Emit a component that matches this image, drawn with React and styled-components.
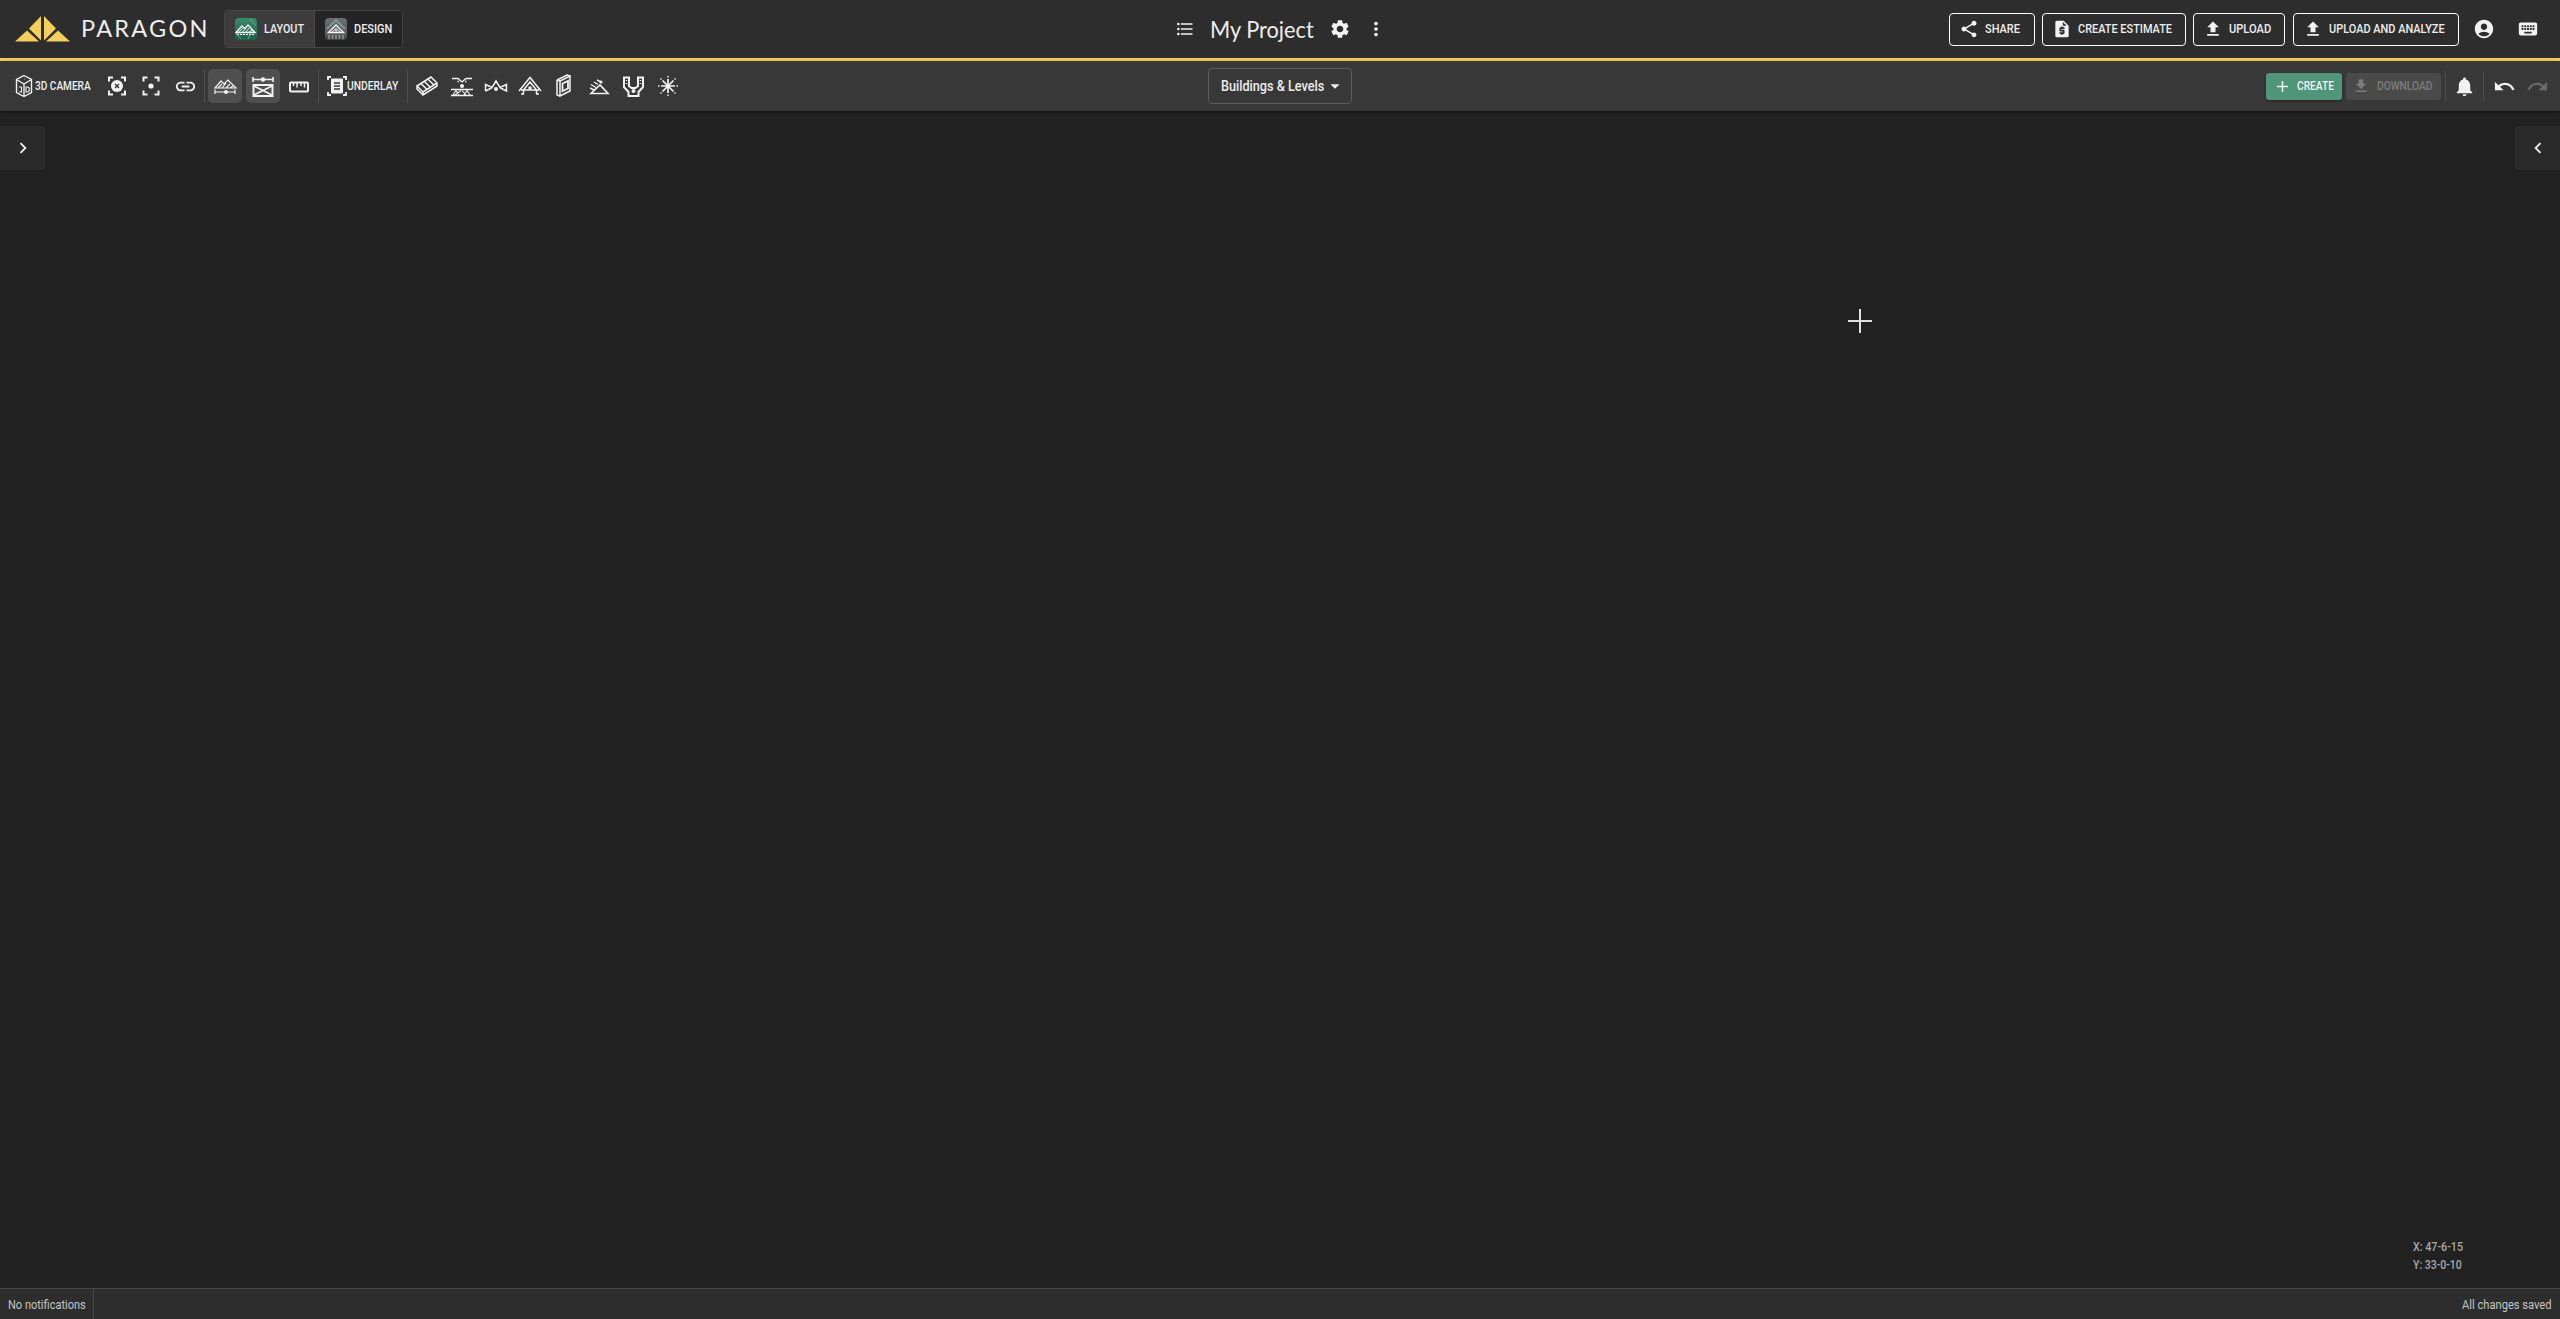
import React, { useLayoutEffect, useRef, useState } from "react";
import styled, { createGlobalStyle } from "styled-components";
import {
  MdShare, MdRequestQuote, MdFileUpload, MdFileDownload, MdAccountCircle, MdKeyboard, MdSettings, MdMoreVert,
  MdAdd, MdNotifications, MdUndo, MdRedo, MdChevronLeft, MdChevronRight, MdLink, MdArrowDropDown, MdFormatListBulleted,
} from "react-icons/md";

const Global = createGlobalStyle`
  html, body { margin: 0; padding: 0; background: #212121; }
  #root { height: 100vh; }
  * { box-sizing: border-box; }
  svg { flex-shrink: 0; }
  body { font-family: Roboto, "Liberation Sans", sans-serif; color: #eee; overflow: hidden; }
`;

const Page = styled.div`
  display: flex; flex-direction: column; height: 1319px; width: 2560px;
`;
const Header = styled.header`
  flex: 0 0 61px; display: grid; grid-template-columns: 1fr auto 1fr; align-items: center;
  background: #2d2d2d; border-bottom: 3px solid #f5cf5c;
`;
const HeaderLeft = styled.div`
  display: flex; align-items: center; padding-left: 15px;
`;
const Brand = styled.div`
  display: flex; align-items: center; gap: 10px; width: 209px;
`;
const BrandName = styled.span`
  font-family: Lato, sans-serif; font-size: 23.5px; letter-spacing: 2.25px; color: #eee; font-weight: 400; line-height: 1;
`;
const ModeTabs = styled.div`
  display: flex; height: 38px; border: 1px solid #444; border-radius: 4px; overflow: hidden;
`;
const ModeTab = styled.div`
  display: flex; align-items: center; gap: 7px; width: ${p => p.$w}px; padding-left: 10px;
  background: ${p => (p.$active ? "#3c3c3c" : "#242424")};
  ${p => p.$active && "border-right: 1px solid #4a4a4a;"}
`;
const FitBox = styled.span`
  display: flex; align-items: center; flex: 0 0 auto; width: ${p => p.$w}px; white-space: nowrap; line-height: 1;
`;
const FitInner = styled.span`
  display: block; flex: 0 0 auto; transform-origin: left center; line-height: 1;
  font-family: ${p => p.$family || "Roboto, sans-serif"};
  font-size: ${p => p.$size || 13.5}px; font-weight: ${p => p.$weight || 500}; color: ${p => p.$color || "#eee"};
`;
const HeaderCenter = styled.div`
  display: flex; align-items: center; color: #f2f2f2;
`;
const CenterIcon = styled.div`
  display: flex; align-items: center; justify-content: center; width: 24px; margin: 0 ${p => p.$mr || 0}px 0 ${p => p.$ml || 0}px;
`;
const HeaderRight = styled.div`
  display: flex; align-items: center; justify-content: flex-end; padding-right: 13px;
`;
const OutlineButton = styled.div`
  display: flex; align-items: center; gap: 6px; width: ${p => p.$w}px; height: 33px; padding-left: 9px;
  margin-right: ${p => p.$mr}px; border: 1px solid #fff; border-radius: 4px; color: #f2f2f2;
`;
const RoundIcon = styled.div`
  display: flex; align-items: center; justify-content: center; width: ${p => p.$w}px;
  color: ${p => p.$color || "#f2f2f2"};
`;
const Toolbar = styled.div`
  flex: 0 0 50px; display: grid; grid-template-columns: 1fr auto 1fr; align-items: center;
  background: #383838; box-shadow: 0 1px 3px rgba(0,0,0,.5); position: relative; z-index: 1;
`;
const ToolGroup = styled.div`
  display: flex; align-items: center; padding-left: 14px;
`;
const LabelTool = styled.div`
  display: flex; align-items: center; gap: ${p => p.$gap || 0}px; width: ${p => p.$w}px; height: 34px; padding-left: ${p => p.$pl}px;
`;
const ToolBtn = styled.div`
  display: flex; align-items: center; justify-content: center; width: ${p => p.$w || 34}px; height: 34px;
  margin-right: ${p => p.$mr || 0}px; border-radius: 5px; color: #f2f2f2;
  background: ${p => (p.$active ? "#4f4f4f" : "transparent")};
`;
const Sep = styled.div`
  width: 1px; height: ${p => p.$h || 34}px; background: #4e4e4e; margin: 0 ${p => p.$mr ?? 3}px 0 ${p => p.$ml ?? 2}px;
`;
const SelectBtn = styled.div`
  display: flex; align-items: center; width: 144px; height: 36px; padding-left: 12px;
  border: 1px solid #5c5c5c; border-radius: 4px; color: #eee;
`;
const ToolRight = styled.div`
  display: flex; align-items: center; justify-content: flex-end; padding-right: 7px;
`;
const Filled = styled.div`
  display: flex; align-items: center; gap: ${p => p.$gap}px; width: ${p => p.$w}px; height: 27px; padding-left: ${p => p.$pl}px;
  margin-right: ${p => p.$mr || 0}px; border-radius: 3px; background: ${p => p.$bg};
  color: ${p => p.$color}; ${p => p.$shadow && "box-shadow: 0 1px 3px rgba(0,0,0,.4);"}
`;
const Canvas = styled.main`
  flex: 1; position: relative; background: #212121;
`;
const SideToggle = styled.div`
  position: absolute; top: 15px; ${p => p.$side}: 0; width: 45px; height: 44px;
  display: flex; align-items: center; justify-content: center; background: #2a2a2a; color: #eee;
  border-radius: ${p => (p.$side === "left" ? "0 4px 4px 0" : "4px 0 0 4px")};
`;
const CrossH = styled.div`
  position: absolute; left: 1848px; top: 209px; width: 24px; height: 2px; background: #e0e0e0;
`;
const CrossV = styled.div`
  position: absolute; left: 1859px; top: 198px; width: 2px; height: 24px; background: #e0e0e0;
`;
const Coords = styled.div`
  position: absolute; left: 2413px; bottom: 17px; display: flex; flex-direction: column; gap: 6px;
`;
const StatusBar = styled.footer`
  flex: 0 0 31px; display: flex; align-items: center; justify-content: space-between; background: #2d2d2d;
  border-top: 1px solid #464646;
`;
const StatusCell = styled.div`
  display: flex; align-items: center; height: 100%; padding: 0 8px;
  ${p => p.$divided && "border-right: 1px solid #464646; width: 94px;"}
`;

/* Roboto Condensed is not installed: the label is scaled to its measured width */
const Label = ({ w, size, color, weight, family, children }) => {
  const ref = useRef(null);
  const [scale, setScale] = useState(1);
  useLayoutEffect(() => {
    setScale(w / ref.current.offsetWidth);
  }, [w]);
  return (
    <FitBox $w={w}>
      <FitInner ref={ref} $size={size} $color={color} $weight={weight} $family={family} style={{ transform: `scaleX(${scale})` }}>
        {children}
      </FitInner>
    </FitBox>
  );
};

const Svg = ({ s = 34, w, h, children, ...rest }) => (
  <svg width={w || s} height={h || s} viewBox={`0 0 ${w || s} ${h || s}`} fill="none" stroke="#f2f2f2" strokeWidth="1.5" {...rest}>
    {children}
  </svg>
);

const Logo = () => (
  <svg width="56" height="26" viewBox="15 16 56 26" fill="#f5cf5c">
    <polygon points="15,41.5 39,41.5 27,30.5" />
    <polygon points="41,16 41,40.5 29,28.5" />
    <polygon points="44,16 44,40.5 56,28.5" />
    <polygon points="46,41.5 70,41.5 58,30.5" />
  </svg>
);

const LayoutIcon = () => (
  <svg width="22" height="22" viewBox="0 0 22 22" fill="none" stroke="#f4f4f4" strokeWidth="1.2">
    <defs>
      <linearGradient id="layoutBg" x1="0" y1="0" x2="0" y2="1">
        <stop offset="0" stopColor="#3a8a6c" /><stop offset="1" stopColor="#1f5f49" />
      </linearGradient>
    </defs>
    <rect width="22" height="22" rx="4" fill="url(#layoutBg)" stroke="none" />
    <path d="M15 1 L21 8 M1 15 L6 21 M17 13 L13 21" stroke="#5fae90" strokeWidth="1" />
    <path d="M1 14.5 L7 8 L10 10.5 L13 7 L20 14.5 Z" strokeWidth="1.4" />
    <path d="M4 14 L8 10 M7.5 14 L11 10 M11 14 L14 10 M14 14 L17 12" strokeWidth="1" />
    <path d="M2 16.5 H19" strokeDasharray="2 1" />
  </svg>
);
const DesignIcon = () => (
  <svg width="22" height="22" viewBox="0 0 22 22" fill="none" stroke="#f4f4f4" strokeWidth="1.2">
    <defs>
      <linearGradient id="designBg" x1="0" y1="0" x2="0" y2="1">
        <stop offset="0" stopColor="#667270" /><stop offset=".7" stopColor="#5a5f5e" /><stop offset="1" stopColor="#3f4241" />
      </linearGradient>
    </defs>
    <rect width="22" height="22" rx="4" fill="url(#designBg)" stroke="none" />
    <path d="M2 11 L11 2 L20 11" stroke="#8d9a97" strokeWidth="1.6" />
    <path d="M3.5 14.5 L11 7 L18.5 14.5 Z" strokeWidth="1.4" />
    <path d="M7 14 L11 10.5 L15 14 M11 10.5 V14" strokeWidth="1" />
    <path d="M4 17 V21 M7.5 17 V21 M11 17 V21 M14.5 17 V21 M18 17 V21" stroke="#9a9a9a" strokeWidth="1.4" />
  </svg>
);

const Cube = () => (
  <Svg s={20} w={18} h={24} strokeWidth="1.4">
    <path d="M9 1.5 L16.5 5.5 V18.5 L9 22.5 L1.5 18.5 V5.5 Z M1.5 5.5 L9 10 L16.5 5.5 M9 10 V22.5" />
    <path d="M4 13 h2.5 v5 h-2.5 M11 13 h2 l1.2 1 v3 l-1.2 1 h-2 Z M9 5 h.6" strokeWidth="1.1" />
  </Svg>
);
const Corners = ({ children, o = 0 }) => (
  <Svg s={24} strokeWidth="2">
    <path d={`M${8+o} 3.5 H${4+o} V7.5 M${16-o} 3.5 H${20-o} V7.5 M${8+o} 20.5 H${4+o} V16.5 M${16-o} 20.5 H${20-o} V16.5`} />
    {children}
  </Svg>
);
const FocusX = () => (
  <Corners>
    <circle cx="12" cy="12" r="6" fill="#f2f2f2" stroke="none" />
    <path d="M10 10 L14 14 M14 10 L10 14" stroke="#383838" strokeWidth="1.4" />
  </Corners>
);
const FocusDot = () => (
  <Corners o={0.5}><circle cx="12" cy="12" r="2.6" fill="#f2f2f2" stroke="none" /></Corners>
);
const RoofDim = () => (
  <Svg>
    <path d="M7 19 L13 12 L16 15 L20 11 L28 19 Z M10 19 L14 15 M14 19 L18 14 M18 19 L22 15 M22 19 L25 17" strokeWidth="1.2" />
    <path d="M7 20.5 V25 M7 23 H27 M27 20.5 V25" strokeWidth="1.2" />
    <circle cx="18" cy="23" r="2" fill="#f2f2f2" stroke="none" />
  </Svg>
);
const FloorDim = () => (
  <Svg strokeWidth="1.6">
    <path d="M7 8 V13 M7 10.5 H27 M27 8 V13" />
    <circle cx="17" cy="10.5" r="2.2" fill="#f2f2f2" stroke="none" />
    <rect x="7.5" y="16" width="19" height="11" strokeWidth="2" />
    <path d="M8 17 L26 26 M26 17 L8 26" />
  </Svg>
);
const Ruler = () => (
  <Svg strokeWidth="2">
    <rect x="8" y="13.5" width="18" height="9" rx="1" />
    <path d="M11.5 13.5 V17 M15 13.5 V18.5 M19 13.5 V17 M22.5 13.5 V18.5" strokeWidth="1.5" />
  </Svg>
);
const Underlay = () => (
  <Svg s={20} strokeWidth="1.8">
    <path d="M4 1 H1 V4 M16 1 H19 V4 M4 19 H1 V16 M16 19 H19 V16" />
    <rect x="4" y="2.5" width="12" height="15" rx="1" fill="#f2f2f2" stroke="none" />
    <path d="M7 7 H13 M7 10 H13 M7 13 H13" stroke="#383838" strokeWidth="1.5" />
  </Svg>
);
const Beam = () => (
  <Svg strokeWidth="1.5">
    <path d="M7 17 L21 8 L27 14 L13 23 Z M7 17 V20 L13 26 L27 17 V14 M13 23 V26" />
    <path d="M11 14.5 L17 20.5 M14.5 12.5 L20.5 18.5 M18 10.2 L24 16" />
  </Svg>
);
const LoadTruss = () => (
  <Svg strokeWidth="1.3">
    <path d="M7 9.5 H13 L17 13 L21 9.5 H27 M14 12.5 H12.5 M20 12.5 H21.5" />
    <circle cx="17" cy="17" r="2" fill="#f2f2f2" stroke="none" />
    <path d="M6 20.5 H28 M6 26.5 H28" strokeWidth="1.6" />
    <path d="M8 26 L11 21.5 L14 26 M10 26 L16 21.5 M19 26 L22 21.5 L25 26 M17 21.5 L21 26" strokeWidth="1.1" />
  </Svg>
);
const Hip = () => (
  <Svg strokeWidth="1.5">
    <path d="M6.5 22 V15.5 L13 18.5 L17 12 L21 18.5 L27.5 15.5 V22 L21.5 19 M6.5 22 L12.5 19" />
    <circle cx="17" cy="20" r="2" fill="#f2f2f2" stroke="none" />
  </Svg>
);
const House = () => (
  <Svg strokeWidth="1.5">
    <path d="M6 22 L17 8.5 L28 22 M10.5 21 L17 13 L23.5 21 M8 21 H26 M10.5 21 V25 M23.5 21 V25 M8 25 H11 M23 25 H26" />
    <circle cx="17" cy="19" r="1.8" fill="#f2f2f2" stroke="none" />
  </Svg>
);
const Panel = () => (
  <Svg strokeWidth="1.5">
    <path d="M12 12 L22 7 V22 L12 27 Z M9 11 L19 6 L22 7 M9 11 V26 L12 27 M9 11 L12 12" />
    <path d="M14.5 14.5 L20 12 V19.5 L14.5 22 Z" strokeWidth="1.8" />
  </Svg>
);
const Slope = () => (
  <Svg strokeWidth="1.4">
    <path d="M9 24.5 H26 L18 16 Z" strokeWidth="1.6" />
    <path d="M8 19 L12 21 M9 15.5 L14 18.5 M12 13 L16 15.5 M15 11 L19 13" />
    <circle cx="19" cy="13" r="1.6" fill="#f2f2f2" stroke="none" />
  </Svg>
);
const Hanger = () => (
  <Svg strokeWidth="2">
    <path d="M7 8.5 H12 V17 L14.5 19 H18.5 L21 17 V8.5 H26 V18 L21.5 23 V27 H11.5 V23 L7 18 Z" />
    <circle cx="16.5" cy="22" r="2" fill="#f2f2f2" stroke="none" />
    <path d="M9.5 11 V12 M9.5 14 V15 M23.5 11 V12 M23.5 14 V15" strokeWidth="1.6" />
  </Svg>
);
const Burst = () => (
  <Svg strokeWidth="1.7">
    <path d="M17 10 V24 M10 17 H24 M11.5 11.5 L22.5 22.5 M22.5 11.5 L11.5 22.5" />
    <path d="M17 7 V8.5 M17 25.5 V27 M7 17 H8.5 M25.5 17 H27 M9.5 9.5 L10.5 10.5 M24.5 9.5 L23.5 10.5 M9.5 24.5 L10.5 23.5 M24.5 24.5 L23.5 23.5" strokeWidth="1.4" />
  </Svg>
);

const Tool = ({ icon: I, ...p }) => <ToolBtn {...p}><I /></ToolBtn>;

const rightButtons = [
  { label: "SHARE", icon: MdShare, w: 86, text: 35, mr: 7 },
  { label: "CREATE ESTIMATE", icon: MdRequestQuote, w: 144, text: 94, mr: 7 },
  { label: "UPLOAD", icon: MdFileUpload, w: 92, text: 42, mr: 8 },
  { label: "UPLOAD AND ANALYZE", icon: MdFileUpload, w: 166, text: 116, mr: 0 },
];

export default function App() {
  return (
    <Page>
      <Global />
      <Header>
        <HeaderLeft>
          <Brand>
            <Logo />
            <BrandName>PARAGON</BrandName>
          </Brand>
          <ModeTabs>
            <ModeTab $active $w={90}>
              <LayoutIcon />
              <Label w={40}>LAYOUT</Label>
            </ModeTab>
            <ModeTab $w={87}>
              <DesignIcon />
              <Label w={38}>DESIGN</Label>
            </ModeTab>
          </ModeTabs>
        </HeaderLeft>
        <HeaderCenter>
          <CenterIcon $mr={13}><MdFormatListBulleted size={20} /></CenterIcon>
          <Label w={104} size={23} weight={400} family="Lato, sans-serif">My Project</Label>
          <CenterIcon $ml={14} $mr={12}><MdSettings size={22} /></CenterIcon>
          <CenterIcon><MdMoreVert size={22} /></CenterIcon>
        </HeaderCenter>
        <HeaderRight>
          {rightButtons.map(({ label, icon: I, w, text, mr }) => (
            <OutlineButton key={label} $w={w} $mr={mr}>
              <I size={20} />
              <Label w={text}>{label}</Label>
            </OutlineButton>
          ))}
          <RoundIcon $w={50}><MdAccountCircle size={22} /></RoundIcon>
          <RoundIcon $w={38}><MdKeyboard size={22} /></RoundIcon>
        </HeaderRight>
      </Header>
      <Toolbar>
        <ToolGroup>
          <LabelTool $w={86} $pl={1} $gap={2}><Cube /><Label w={56}>3D CAMERA</Label></LabelTool>
          <Tool icon={FocusX} />
          <Tool icon={FocusDot} />
          <ToolBtn><MdLink size={23} /></ToolBtn>
          <Sep />
          <Tool icon={RoofDim} $active $mr={4} />
          <Tool icon={FloorDim} $active $mr={2} />
          <Tool icon={Ruler} />
          <Sep />
          <LabelTool $w={83} $pl={5}><Underlay /><Label w={51}>UNDERLAY</Label></LabelTool>
          <Sep $mr={2} />
          {[Beam, LoadTruss, Hip, House, Panel, Slope, Hanger, Burst].map((I, i) => (
            <ToolBtn key={i} $w={34.4}><I /></ToolBtn>
          ))}
        </ToolGroup>
        <SelectBtn>
          <Label w={103} size={14}>Buildings &amp; Levels</Label>
          <MdArrowDropDown size={22} />
        </SelectBtn>
        <ToolRight>
          <Filled $w={76} $pl={7} $gap={5} $bg="#4e9579" $color="#f4f4f4" $shadow $mr={4}>
            <MdAdd size={19} /><Label w={37} color="#f4f4f4">CREATE</Label>
          </Filled>
          <Filled $w={95} $pl={6} $gap={7} $bg="#4a4a4a" $color="#7c7c7c">
            <MdFileDownload size={18} />
            <Label w={55} color="#7c7c7c">DOWNLOAD</Label>
          </Filled>
          <Sep $h={30} $ml={4} $mr={0} />
          <RoundIcon $w={37}><MdNotifications size={23} /></RoundIcon>
          <Sep $h={30} $ml={0} $mr={4} />
          <RoundIcon $w={33}><MdUndo size={23} /></RoundIcon>
          <RoundIcon $w={32} $color="#6a6a6a"><MdRedo size={23} /></RoundIcon>
        </ToolRight>
      </Toolbar>
      <Canvas>
        <SideToggle $side="left"><MdChevronRight size={22} /></SideToggle>
        <SideToggle $side="right"><MdChevronLeft size={22} /></SideToggle>
        <CrossH /><CrossV />
        <Coords>
          <Label w={50} size={12} color="#a8a8a8">X: 47-6-15</Label>
          <Label w={49} size={12} color="#a8a8a8">Y: 33-0-10</Label>
        </Coords>
      </Canvas>
      <StatusBar>
        <StatusCell $divided><Label w={78} size={13} weight={400} color="#c4c4c4">No notifications</Label></StatusCell>
        <StatusCell><Label w={90} size={13} weight={400} color="#c4c4c4">All changes saved</Label></StatusCell>
      </StatusBar>
    </Page>
  );
}
